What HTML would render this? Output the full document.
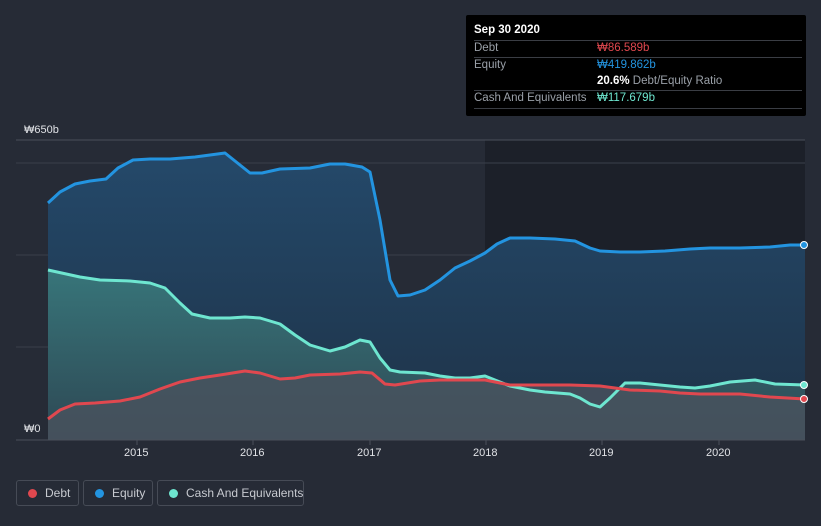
<!DOCTYPE html>
<html><head><style>
body{margin:0;width:821px;height:526px;background:#262b36;font-family:"Liberation Sans",sans-serif;overflow:hidden;position:relative}
.tt{position:absolute;left:466px;top:15px;width:340px;height:101px;background:#000;border-radius:2px}
.tt div{position:absolute;font-size:11.5px;color:#9aa0a8;white-space:nowrap}
.tt .ln{position:absolute;left:8px;width:328px;height:1px;background:#3a3d44}
.btn{position:absolute;top:480px;height:26px;border:1px solid #464b56;border-radius:3px;box-sizing:border-box;color:#c7cad0;font-size:12px;line-height:25px;white-space:nowrap}
.btn i{position:absolute;left:11px;top:8px;width:9px;height:9px;border-radius:50%}
.btn span{position:absolute;left:28px}
.ax{position:absolute;top:447px;color:#e0e2e6;font-size:11px}
</style></head><body>
<svg width="821" height="526" style="position:absolute;left:0;top:0">
<defs>
<linearGradient id="ge" x1="0" y1="0" x2="0" y2="1"><stop offset="0" stop-color="#24496a"/><stop offset="1" stop-color="#1e3247"/></linearGradient>
<linearGradient id="gc" x1="0" y1="0" x2="0" y2="1"><stop offset="0" stop-color="#3a7b7d"/><stop offset="1" stop-color="#2f4a55"/></linearGradient>
</defs>
<rect x="485" y="140" width="320" height="300" fill="#1c2029"/>
<line x1="16" y1="140" x2="805" y2="140" stroke="#4a4f5a"/>
<line x1="16" y1="163" x2="805" y2="163" stroke="#3a3f4a"/>
<line x1="16" y1="255" x2="805" y2="255" stroke="#3a3f4a"/>
<line x1="16" y1="347" x2="805" y2="347" stroke="#3a3f4a"/>
<path fill="url(#ge)" d="M48,203 L60,192 L75,184 L90,181 L106,179 L118,168 L133,160 L150,159 L170,159 L195,157 L210,155 L225,153 L235,161 L250,173 L262,173 L280,169 L310,168 L330,164 L345,164 L362,167 L370,172 L380,220 L390,280 L398,296 L410,295 L425,290 L440,280 L455,268 L470,261 L485,253 L497,244 L510,238 L530,238 L555,239 L575,241 L590,248 L600,251 L620,252 L640,252 L665,251 L690,249 L710,248 L740,248 L770,247 L790,245 L805,245 L805,440 L48,440Z"/>
<path fill="url(#gc)" opacity="0.9" d="M48,270 L80,277 L100,280 L130,281 L150,283 L165,288 L180,303 L192,314 L210,318 L230,318 L245,317 L260,318 L280,324 L295,335 L310,345 L330,351 L345,347 L360,340 L370,342 L380,358 L390,370 L400,372 L425,373 L440,376 L455,378 L470,378 L485,376 L495,380 L510,386 L530,390 L545,392 L570,394 L580,398 L590,404 L600,407 L610,398 L625,383 L640,383 L660,385 L680,387 L695,388 L710,386 L730,382 L755,380 L775,384 L805,385 L805,440 L48,440Z"/>
<path fill="#4a525e" opacity="0.8" d="M48,419 L60,410 L75,404 L95,403 L120,401 L140,397 L160,389 L180,382 L200,378 L220,375 L245,371 L260,373 L280,379 L295,378 L310,375 L340,374 L360,372 L372,373 L385,384 L395,385 L420,381 L440,380 L470,380 L485,380 L510,385 L550,385 L570,385 L600,386 L630,390 L660,391 L680,393 L700,394 L740,394 L770,397 L805,399 L805,440 L48,440Z"/>
<g fill="none" stroke-width="3" stroke-linejoin="round">
<path stroke="#2394e0" d="M48,203 L60,192 L75,184 L90,181 L106,179 L118,168 L133,160 L150,159 L170,159 L195,157 L210,155 L225,153 L235,161 L250,173 L262,173 L280,169 L310,168 L330,164 L345,164 L362,167 L370,172 L380,220 L390,280 L398,296 L410,295 L425,290 L440,280 L455,268 L470,261 L485,253 L497,244 L510,238 L530,238 L555,239 L575,241 L590,248 L600,251 L620,252 L640,252 L665,251 L690,249 L710,248 L740,248 L770,247 L790,245 L805,245"/>
<path stroke="#6ee6d0" d="M48,270 L80,277 L100,280 L130,281 L150,283 L165,288 L180,303 L192,314 L210,318 L230,318 L245,317 L260,318 L280,324 L295,335 L310,345 L330,351 L345,347 L360,340 L370,342 L380,358 L390,370 L400,372 L425,373 L440,376 L455,378 L470,378 L485,376 L495,380 L510,386 L530,390 L545,392 L570,394 L580,398 L590,404 L600,407 L610,398 L625,383 L640,383 L660,385 L680,387 L695,388 L710,386 L730,382 L755,380 L775,384 L805,385"/>
<path stroke="#e0484f" d="M48,419 L60,410 L75,404 L95,403 L120,401 L140,397 L160,389 L180,382 L200,378 L220,375 L245,371 L260,373 L280,379 L295,378 L310,375 L340,374 L360,372 L372,373 L385,384 L395,385 L420,381 L440,380 L470,380 L485,380 L510,385 L550,385 L570,385 L600,386 L630,390 L660,391 L680,393 L700,394 L740,394 L770,397 L805,399"/>
</g>
<circle cx="804" cy="245" r="3.5" fill="#2394e0" stroke="#fff"/>
<circle cx="804" cy="385" r="3.5" fill="#6ee6d0" stroke="#fff"/>
<circle cx="804" cy="399" r="3.5" fill="#e0484f" stroke="#fff"/>
<rect x="16" y="420" width="32" height="20" fill="#262b36"/>
<line x1="16" y1="440" x2="805" y2="440" stroke="#4a4f5a"/>
<g stroke="#4a4f5a"><line x1="137" y1="440" x2="137" y2="445"/><line x1="253" y1="440" x2="253" y2="445"/><line x1="370" y1="440" x2="370" y2="445"/><line x1="486" y1="440" x2="486" y2="445"/><line x1="602" y1="440" x2="602" y2="445"/><line x1="719" y1="440" x2="719" y2="445"/></g>
<text x="24" y="133" fill="#e0e2e6" font-size="11" font-family="Liberation Sans">₩650b</text>
<text x="24" y="432" fill="#e0e2e6" font-size="11" font-family="Liberation Sans">₩0</text>
</svg>
<div class="ax" style="left:124px">2015</div><div class="ax" style="left:240px">2016</div><div class="ax" style="left:357px">2017</div><div class="ax" style="left:473px">2018</div><div class="ax" style="left:589px">2019</div><div class="ax" style="left:706px">2020</div>
<div class="tt">
<div style="left:8px;top:9px;color:#fff;font-weight:bold">Sep 30 2020</div>
<div class="ln" style="top:25px"></div>
<div style="left:8px;top:27px">Debt</div><div style="left:131px;top:27px;color:#e0484f">₩86.589b</div>
<div class="ln" style="top:42px"></div>
<div style="left:8px;top:44px">Equity</div><div style="left:131px;top:44px;color:#2394e0">₩419.862b</div>
<div style="left:131px;top:60px;color:#9aa0a8"><b style="color:#fff">20.6%</b> Debt/Equity Ratio</div>
<div class="ln" style="top:75px"></div>
<div style="left:8px;top:77px">Cash And Equivalents</div><div style="left:131px;top:77px;color:#6ee6d0">₩117.679b</div>
<div class="ln" style="top:93px"></div>
</div>
<div class="btn" style="left:16px;width:63px"><i style="background:#e0484f"></i><span>Debt</span></div>
<div class="btn" style="left:83px;width:70px"><i style="background:#2394e0"></i><span>Equity</span></div>
<div class="btn" style="left:157px;width:147px"><i style="background:#6ee6d0"></i><span>Cash And Equivalents</span></div>
</body></html>
